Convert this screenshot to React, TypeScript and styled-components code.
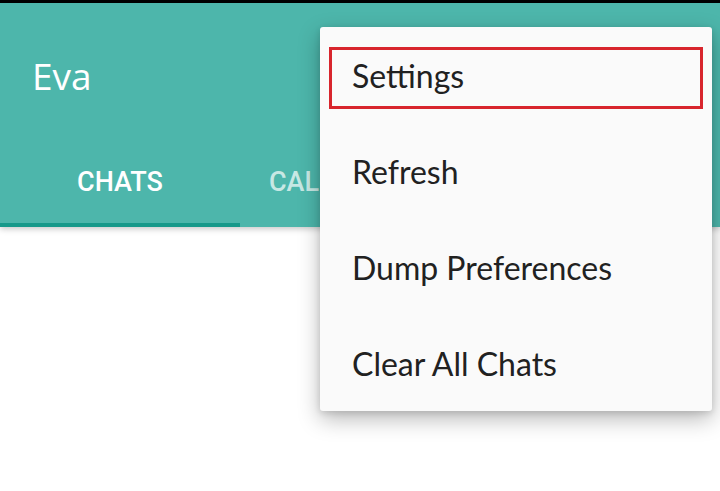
import React from 'react';
import styled, { createGlobalStyle } from 'styled-components';

const menuItems = ['Settings', 'Refresh', 'Dump Preferences', 'Clear All Chats'];
const tabs = ['CHATS', 'CALL HISTORY', 'CONTACTS'];

const App: React.FC = () => {
  return (
    <Screen>
      <GlobalStyle />
      <StatusBar />
      <Header>
        <Toolbar>
          <Title>Eva</Title>
        </Toolbar>
        <TabBar>
          {tabs.map((tab, i) => (
            <Tab key={tab} active={i === 0}>
              {tab}
            </Tab>
          ))}
        </TabBar>
      </Header>
      <Content />
      <Menu>
        {menuItems.map((item, i) => (
          <MenuItem key={item}>
            {item}
            {i === 0 && <Highlight />}
          </MenuItem>
        ))}
      </Menu>
    </Screen>
  );
};

const GlobalStyle = createGlobalStyle`
  html, body {
    margin: 0;
    padding: 0;
    background: #ffffff;
  }
  * {
    box-sizing: border-box;
  }
`;

const Screen = styled.div`
  position: relative;
  width: 720px;
  height: 491px;
  overflow: hidden;
  display: flex;
  flex-direction: column;
  background: #ffffff;
`;

const StatusBar = styled.div`
  height: 3px;
  background: #000000;
`;

const Header = styled.header`
  display: flex;
  flex-direction: column;
  background: #4db6ab;
  box-shadow: 0 2px 6px rgba(0, 0, 0, 0.22);
  position: relative;
  z-index: 1;
`;

const Toolbar = styled.div`
  height: 144px;
  display: flex;
  align-items: center;
  padding-left: 32px;
`;

const Title = styled.h1`
  margin: 0;
  font-family: 'Open Sans', Roboto, sans-serif;
  font-weight: 400;
  font-size: 37px;
  color: #ffffff;
`;

const TabBar = styled.nav`
  display: flex;
  height: 80px;
`;

const Tab = styled.div<{ active?: boolean }>`
  flex: 0 0 240px;
  display: flex;
  align-items: center;
  justify-content: center;
  padding-bottom: 6px;
  font-family: Roboto, 'Liberation Sans', sans-serif;
  font-weight: 500;
  font-size: 27px;
  white-space: nowrap;
  color: ${(p) => (p.active ? '#ffffff' : 'rgba(255, 255, 255, 0.7)')};
  border-bottom: 4px solid ${(p) => (p.active ? '#17998a' : 'transparent')};
`;

const Content = styled.main`
  flex: 1;
  background: #ffffff;
`;

const Menu = styled.ul`
  position: absolute;
  top: 27px;
  right: 8px;
  width: 392px;
  margin: 0;
  padding: 0;
  list-style: none;
  background: #fafafa;
  border-radius: 3px;
  box-shadow: 0 8px 22px rgba(0, 0, 0, 0.28), 0 2px 6px rgba(0, 0, 0, 0.12);
  z-index: 2;
`;

const MenuItem = styled.li`
  position: relative;
  height: 96px;
  display: flex;
  align-items: center;
  padding-left: 32px;
  font-family: Lato, 'Liberation Sans', sans-serif;
  font-size: 32px;
  color: #212121;
`;

const Highlight = styled.span`
  position: absolute;
  left: 9px;
  right: 9px;
  top: 20px;
  bottom: 14px;
  border: 3px solid #d8252d;
`;

export default App;
